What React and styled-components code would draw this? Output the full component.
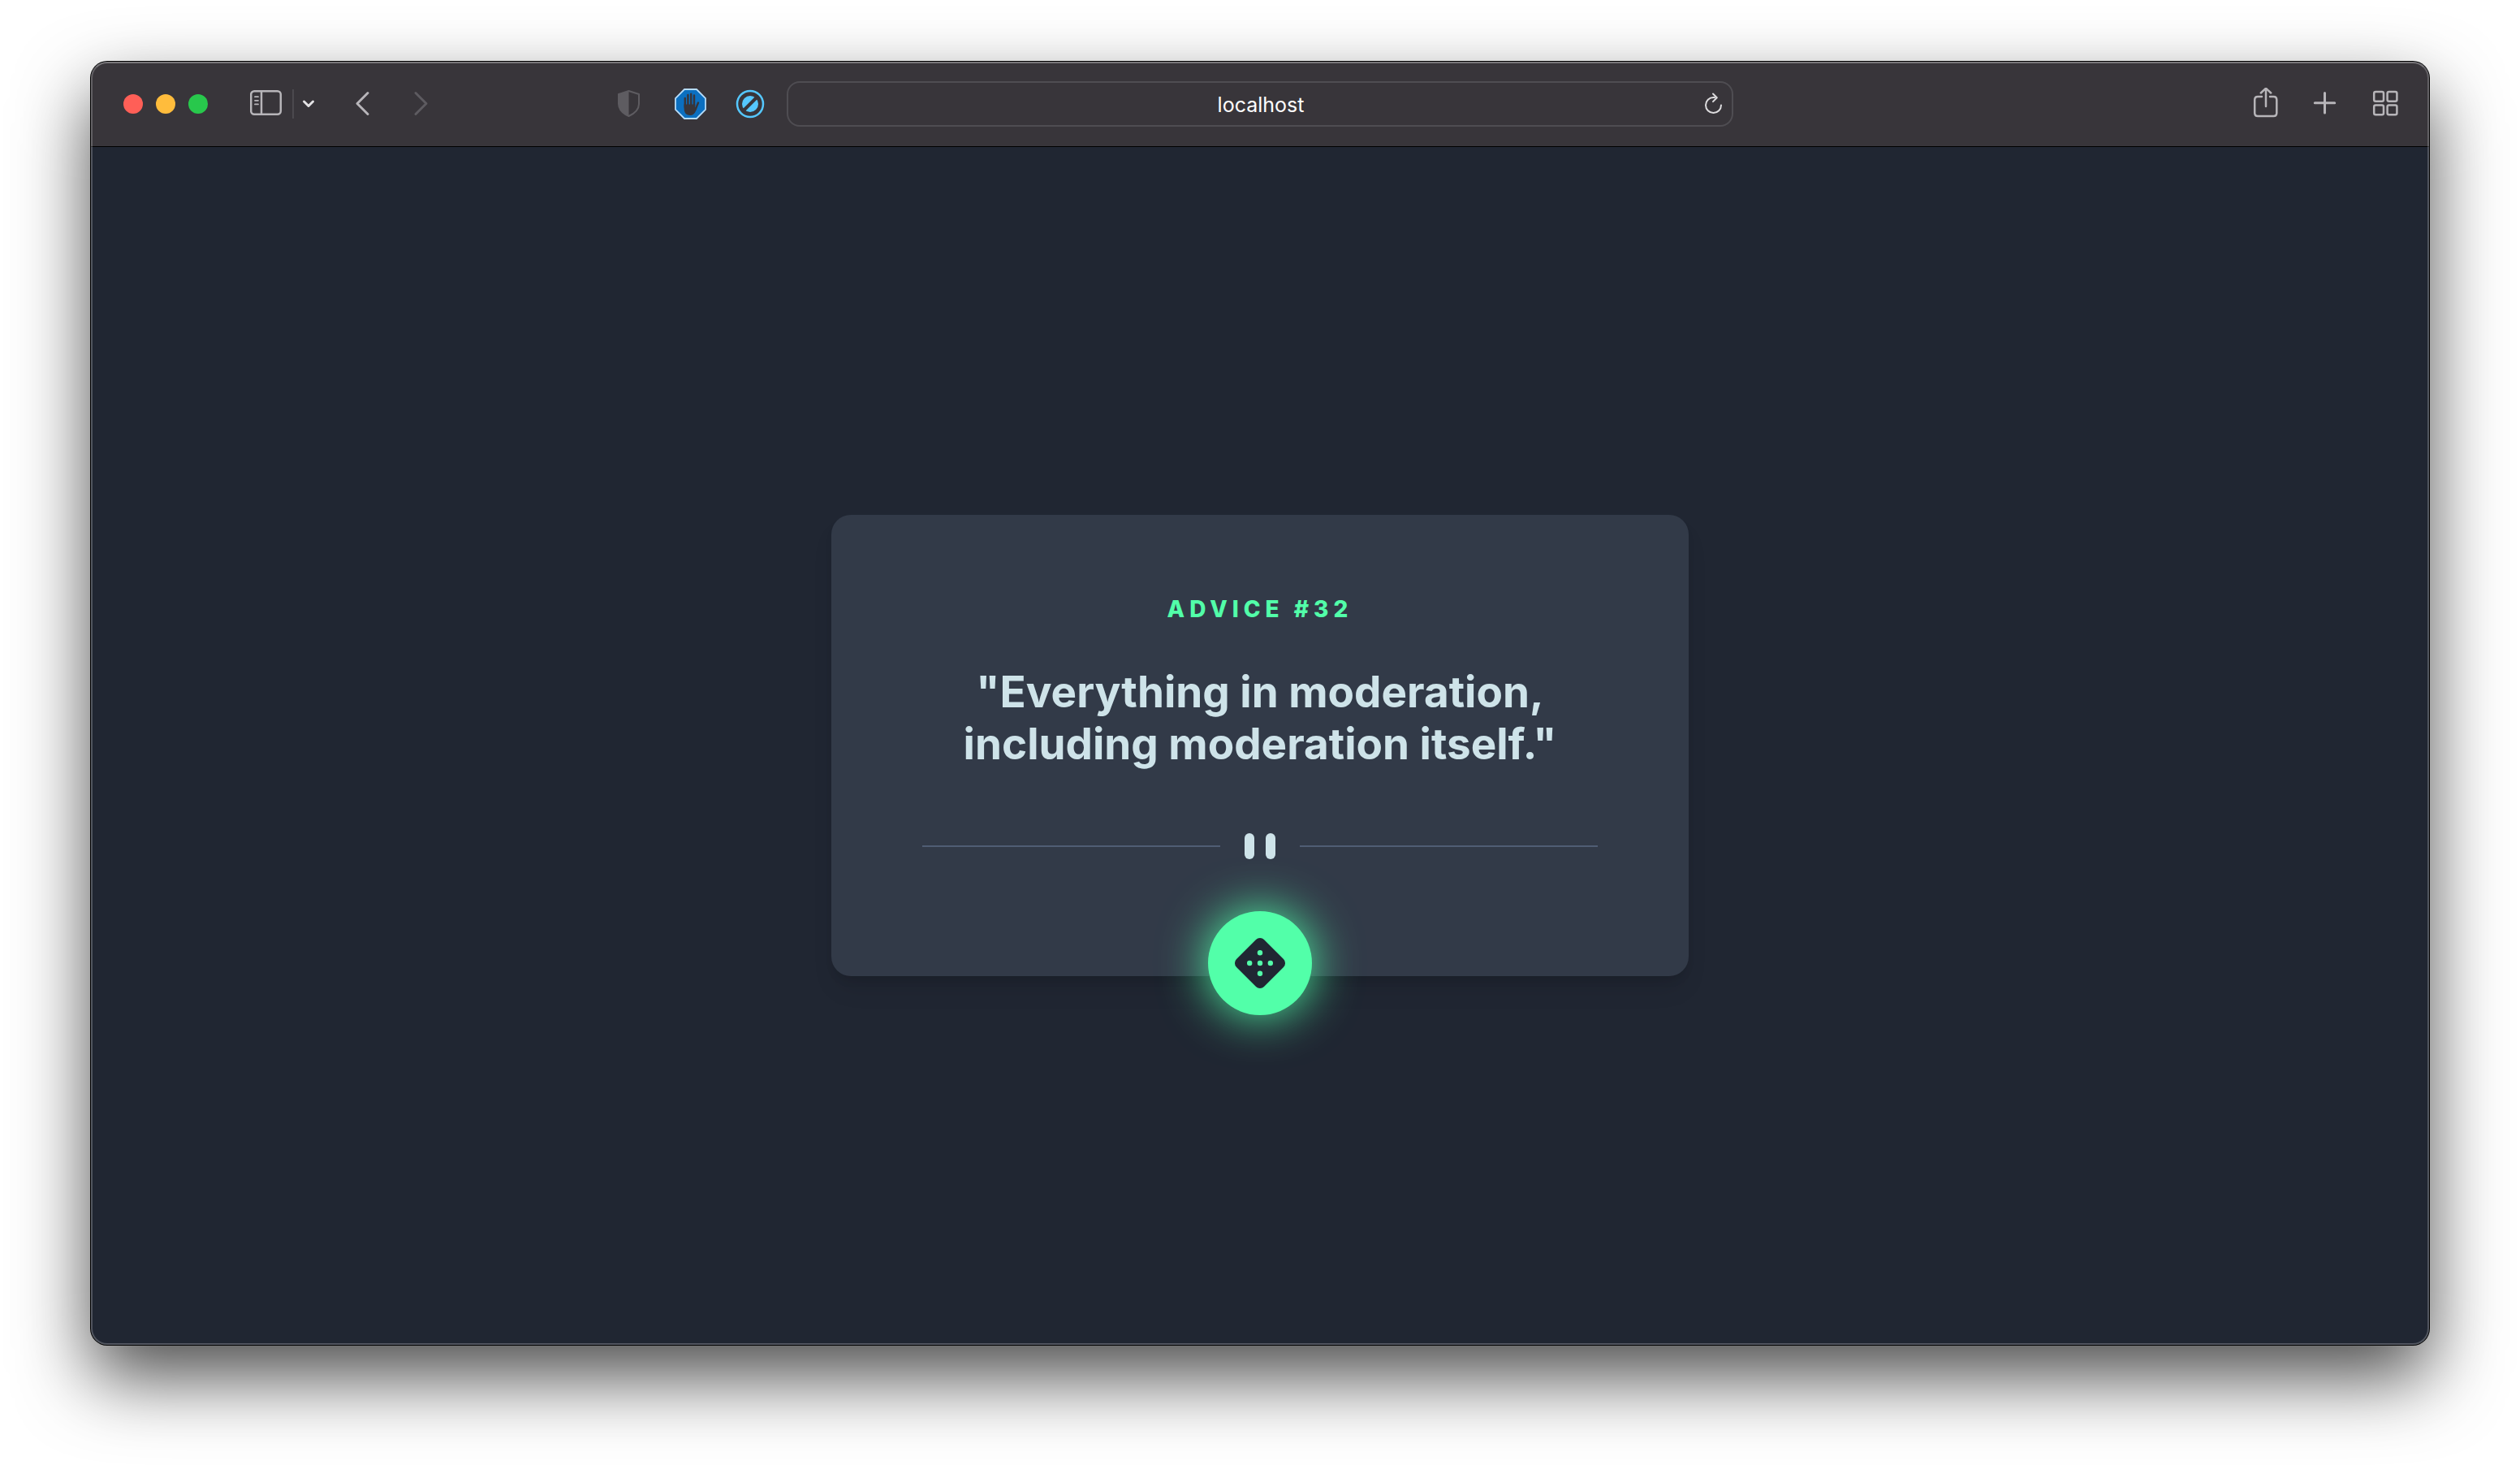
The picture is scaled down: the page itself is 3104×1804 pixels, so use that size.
import React from "react";
import styled, { createGlobalStyle } from "styled-components";

const GlobalStyle = createGlobalStyle`
  *, *::before, *::after { box-sizing: border-box; }
  body { margin: 0; background: #fff; font-family: Inter, "Liberation Sans", sans-serif; }
  button, input { font: inherit; }
`;

const Desktop = styled.div`
  display: flex;
  min-height: 100vh;
  padding: 76px 112px 148px;
  overflow: hidden;
`;

const Window = styled.div`
  position: relative;
  flex: 1;
  display: flex;
  flex-direction: column;
  min-width: 0;
  border-radius: 20px;
  background: #202632;
  box-shadow: 0 0 0 1px #000, 0 40px 90px rgba(0, 0, 0, 0.7);

  &::after {
    content: "";
    position: absolute;
    inset: 0;
    border-radius: inherit;
    border: 2px solid rgba(255, 255, 255, 0.22);
    border-top-color: rgba(255, 255, 255, 0.32);
    pointer-events: none;
  }
`;

const Toolbar = styled.header`
  display: grid;
  grid-template-columns: 1fr minmax(0, 1166px) 1fr;
  align-items: center;
  height: 104px;
  border-radius: 20px 20px 0 0;
  background: #38353a;
  box-shadow: 0 1px 0 #000;
`;

const ToolbarStart = styled.div`
  display: flex;
  align-items: center;
  padding: 0 24px 0 40px;
`;

const ToolbarEnd = styled.div`
  display: flex;
  align-items: center;
  justify-content: flex-end;
  gap: 34px;
  padding-right: 32px;
`;

const Lights = styled.div`
  display: flex;
  gap: 16px;
  margin-right: 52px;
`;

const Light = styled.button`
  width: 24px;
  height: 24px;
  padding: 0;
  border: 0;
  border-radius: 50%;
  background: ${(p) => p.$color};
`;

const SidebarGroup = styled.div`
  display: flex;
  align-items: center;
  margin-right: 36px;
`;

const Separator = styled.span`
  width: 2px;
  height: 36px;
  margin: 0 8px 0 12px;
  background: #4b494e;
`;

const NavGroup = styled.nav`
  display: flex;
  gap: 32px;
`;

const Extensions = styled.div`
  display: flex;
  gap: 34px;
  margin-left: auto;
`;

const IconButton = styled.button`
  display: block;
  padding: 0;
  border: 0;
  background: none;
  color: ${(p) => p.$color || "#b7b5b9"};

  svg {
    display: block;
    fill: none;
    stroke: currentColor;
    stroke-width: 2.5;
    stroke-linecap: round;
    stroke-linejoin: round;
  }
`;

const AddressBar = styled.form`
  display: flex;
  align-items: center;
  height: 56px;
  padding: 0 4px 0 46px;
  border: 2px solid #4f4d52;
  border-radius: 16px;
`;

const Address = styled.input`
  flex: 1;
  min-width: 0;
  padding: 2px 0 0;
  border: 0;
  outline: 0;
  background: none;
  color: #fff;
  font-size: 25px;
  line-height: 32px;
  text-align: center;
`;

const Page = styled.main`
  flex: 1;
  display: flex;
  align-items: center;
  justify-content: center;
`;

const Card = styled.section`
  display: flex;
  flex-direction: column;
  align-items: center;
  width: 1056px;
  max-width: 90%;
  padding: 96px 112px 0;
  border-radius: 24px;
  background: #323a48;
  box-shadow: 0 20px 30px -6px rgba(0, 0, 0, 0.1), 0 8px 12px -4px rgba(0, 0, 0, 0.1);
`;

const AdviceNumber = styled.h1`
  margin: 0 0 50px;
  color: #52ffa9;
  font-size: 28px;
  font-weight: 800;
  line-height: 40px;
  letter-spacing: 6px;
`;

const Quote = styled.p`
  margin: 0 0 78px;
  color: #cee3e9;
  font-size: 53px;
  font-weight: 700;
  line-height: 64px;
  text-align: center;
`;

const Divider = styled.div`
  display: flex;
  align-items: center;
  align-self: stretch;
  gap: 30px;
  margin-bottom: 64px;
`;

const Line = styled.span`
  flex: 1;
  height: 2px;
  background: #4f5d74;
`;

const Bars = styled.span`
  display: flex;
  gap: 14px;
`;

const Bar = styled.span`
  width: 12px;
  height: 32px;
  border-radius: 6px;
  background: #cee3e9;
`;

const DiceButton = styled.button`
  display: grid;
  place-items: center;
  width: 128px;
  height: 128px;
  margin-bottom: -48px;
  padding: 0;
  border: 0;
  border-radius: 50%;
  background: #52ffa9;
  box-shadow: 0 0 60px #52ffa9;
`;

function SidebarIcon() {
  return (
    <svg width="40" height="40" viewBox="0 0 40 40">
      <rect x="1.2" y="4.2" width="36.6" height="28.6" rx="4" />
      <path d="M14 4.500V32.500" />
      <path d="M6 11.200H10M6 15.800H10M6 20.400H10" strokeWidth="1.8" />
    </svg>
  );
}

function DiceIcon() {
  return (
    <svg width="64" height="64" viewBox="-32 -32 64 64" aria-hidden="true">
      <rect x="-24" y="-24" width="48" height="48" rx="7" fill="#202733" transform="rotate(45)" />
      <g fill="#52ffa9">
        <circle r="3.200" />
        <circle cx="-12.800" r="3.200" />
        <circle cx="12.800" r="3.200" />
        <circle cy="-12.800" r="3.200" />
        <circle cy="12.800" r="3.200" />
      </g>
    </svg>
  );
}

function HandIcon() {
  return (
    <svg width="40" height="40" viewBox="0 0 40 40">
      <path
        d="M12 2H27L38 13V27L27 38H12L1 27V13Z"
        fill="#0b6fc0"
        stroke="#b5dcfa"
        strokeWidth="1.8"
        strokeLinejoin="miter"
      />
      <path
        d="M12.800 13V24M16.400 9V22M20.200 7.800V22M24 9.500V22M29 18.500L25.500 27"
        stroke="#38353a"
        strokeWidth="2.4"
      />
      <path
        d="M11.600 20.500H25.200V24.500L27.500 23.500C26.500 28 25 34 19.200 34C13.500 34 11.600 30 11.600 25Z"
        fill="#38353a"
        stroke="none"
      />
    </svg>
  );
}

export default function App() {
  return (
    <>
      <GlobalStyle />
      <Desktop>
        <Window>
          <Toolbar>
            <ToolbarStart>
              <Lights>
                <Light $color="#ff5f57" aria-label="Close" />
                <Light $color="#ffbc3c" aria-label="Minimize" />
                <Light $color="#28c84c" aria-label="Zoom" />
              </Lights>
              <SidebarGroup>
                <IconButton aria-label="Sidebar">
                  <SidebarIcon />
                </IconButton>
                <Separator />
                <IconButton aria-label="Tab groups" $color="#e3e2e4">
                  <svg width="20" height="40" viewBox="0 0 20 40">
                    <path d="M4.500 17L10 22.500L15.500 17" strokeWidth="3" />
                  </svg>
                </IconButton>
              </SidebarGroup>
              <NavGroup aria-label="History">
                <IconButton aria-label="Back">
                  <svg width="40" height="40" viewBox="0 0 40 40">
                    <path d="M27 6.500L14 19.500L27 32.500" strokeWidth="3" />
                  </svg>
                </IconButton>
                <IconButton aria-label="Forward" $color="#5d5b60">
                  <svg width="40" height="40" viewBox="0 0 40 40">
                    <path d="M14 6.500L27 19.500L14 32.500" strokeWidth="3" />
                  </svg>
                </IconButton>
              </NavGroup>
              <Extensions>
                <IconButton aria-label="Privacy report" $color="#5e5c61">
                  <svg width="40" height="40" viewBox="0 0 40 40">
                    <path d="M17.500 4L30 8V20C30 27 25 31.500 17.500 35C10 31.500 5 27 5 20V8Z" strokeWidth="2" />
                    <path d="M17.500 4V35C10 31.500 5 27 5 20V8Z" fill="currentColor" stroke="none" />
                  </svg>
                </IconButton>
                <IconButton aria-label="Ad blocker">
                  <HandIcon />
                </IconButton>
                <IconButton aria-label="Content blocker" $color="#55c8ff">
                  <svg width="40" height="40" viewBox="0 0 40 40">
                    <circle cx="19" cy="20" r="16" />
                    <circle cx="19" cy="20" r="10" fill="currentColor" stroke="none" />
                    <path d="M11 28L27 12" stroke="#38353a" strokeWidth="4" />
                  </svg>
                </IconButton>
              </Extensions>
            </ToolbarStart>
            <AddressBar onSubmit={(e) => e.preventDefault()}>
              <Address type="text" aria-label="Address" defaultValue="localhost" />
              <IconButton type="button" aria-label="Reload" $color="#dddcde">
                <svg width="40" height="40" viewBox="0 0 40 40">
                  <g strokeWidth="2">
                    <path d="M23 12H21.500A9.500 9.500 0 1 0 31 21.500" />
                    <path d="M21 7.500L25.800 12.300L21 17.100" />
                  </g>
                </svg>
              </IconButton>
            </AddressBar>
            <ToolbarEnd>
              <IconButton aria-label="Share">
                <svg width="40" height="40" viewBox="0 0 40 40">
                  <path d="M14 11H9Q5.200 11 5.200 15V31Q5.200 35 9 35H28.500Q32.300 35 32.300 31V15Q32.300 11 28.500 11H24" />
                  <path d="M19 23V1M12.800 6.500L19 0.700L25.200 6.500" />
                </svg>
              </IconButton>
              <IconButton aria-label="New tab">
                <svg width="40" height="40" viewBox="0 0 40 40">
                  <path d="M17.500 6.500V31M5.300 18.700H29.700" strokeWidth="3" />
                </svg>
              </IconButton>
              <IconButton aria-label="Tab overview">
                <svg width="40" height="40" viewBox="0 0 40 40">
                  <rect x="4.200" y="5" width="11.800" height="11.800" rx="2" />
                  <rect x="20.600" y="5" width="11.800" height="11.800" rx="2" />
                  <rect x="4.200" y="21.400" width="11.800" height="11.800" rx="2" />
                  <rect x="20.600" y="21.400" width="11.800" height="11.800" rx="2" />
                </svg>
              </IconButton>
            </ToolbarEnd>
          </Toolbar>
          <Page>
            <Card>
              <AdviceNumber>ADVICE #32</AdviceNumber>
              <Quote>"Everything in moderation, including moderation itself."</Quote>
              <Divider aria-hidden="true">
                <Line />
                <Bars>
                  <Bar />
                  <Bar />
                </Bars>
                <Line />
              </Divider>
              <DiceButton aria-label="New advice">
                <DiceIcon />
              </DiceButton>
            </Card>
          </Page>
        </Window>
      </Desktop>
    </>
  );
}
